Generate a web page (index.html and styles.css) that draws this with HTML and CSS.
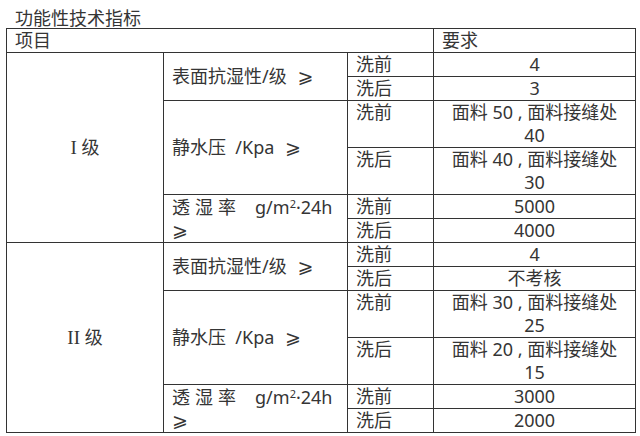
FILE: index.html
```html
<!DOCTYPE html>
<html lang="zh">
<head>
<meta charset="utf-8">
<link rel="stylesheet" href="styles.css">
</head>
<body>
<div class="page">
  <div class="title">功能性技术指标</div>
  <table class="spec">
    <colgroup>
      <col class="c1"><col class="c2"><col class="c3"><col class="c4">
    </colgroup>
    <tr class="r1">
      <td colspan="3" class="head">项目</td>
      <td class="head">要求</td>
    </tr>
    <tr class="r1">
      <td rowspan="6" class="grade"><span class="roman">I</span> 级</td>
      <td rowspan="2" class="item">表面抗湿性/级 <span class="ge">⩾</span></td>
      <td class="wash">洗前</td>
      <td class="val">4</td>
    </tr>
    <tr class="r1">
      <td class="wash">洗后</td>
      <td class="val">3</td>
    </tr>
    <tr class="r2">
      <td rowspan="2" class="item">静水压 &nbsp;/Kpa <span class="ge">⩾</span></td>
      <td class="wash">洗前</td>
      <td class="val">面料 50 , 面料接缝处<br>40</td>
    </tr>
    <tr class="r2">
      <td class="wash">洗后</td>
      <td class="val">面料 40 , 面料接缝处<br>30</td>
    </tr>
    <tr class="r1">
      <td rowspan="2" class="item"><span class="sp">透湿率</span>&nbsp;&nbsp; g/m<sup>2</sup>·24h<br><span class="ge first">⩾</span></td>
      <td class="wash">洗前</td>
      <td class="val">5000</td>
    </tr>
    <tr class="r1">
      <td class="wash">洗后</td>
      <td class="val">4000</td>
    </tr>
    <tr class="r1">
      <td rowspan="6" class="grade"><span class="roman">II</span> 级</td>
      <td rowspan="2" class="item">表面抗湿性/级 <span class="ge">⩾</span></td>
      <td class="wash">洗前</td>
      <td class="val">4</td>
    </tr>
    <tr class="r1">
      <td class="wash">洗后</td>
      <td class="val">不考核</td>
    </tr>
    <tr class="r2">
      <td rowspan="2" class="item">静水压 &nbsp;/Kpa <span class="ge">⩾</span></td>
      <td class="wash">洗前</td>
      <td class="val">面料 30 , 面料接缝处<br>25</td>
    </tr>
    <tr class="r2">
      <td class="wash">洗后</td>
      <td class="val">面料 20 , 面料接缝处<br>15</td>
    </tr>
    <tr class="r1">
      <td rowspan="2" class="item"><span class="sp">透湿率</span>&nbsp;&nbsp; g/m<sup>2</sup>·24h<br><span class="ge first">⩾</span></td>
      <td class="wash">洗前</td>
      <td class="val">3000</td>
    </tr>
    <tr class="r1">
      <td class="wash">洗后</td>
      <td class="val">2000</td>
    </tr>
  </table>
</div>
</body>
</html>
```
FILE: styles.css
```css
html, body {
  margin: 0;
  padding: 0;
  background: #ffffff;
}
.page {
  padding: 8px 0 0 6px;
  font-family: "Noto Sans", "Noto Sans CJK SC", sans-serif;
  font-size: 18px;
  color: #353535;
}
.title {
  line-height: 20px;
  padding-left: 9px;
}
.spec {
  border-collapse: collapse;
  table-layout: fixed;
  width: 629px;
  font-size: 18px;
}
.c1 { width: 157px; }
.c2 { width: 184px; }
.c3 { width: 86px; }
.c4 { width: 202px; }
.spec td {
  border: 1px solid #333333;
  padding: 0 8px;
  line-height: 23px;
  white-space: nowrap;
  overflow: hidden;
}
.r1 { height: 24px; }
.r2 { height: 47px; }
.head { text-align: left; padding-left: 9px; }
.grade { text-align: center; vertical-align: middle; }
.roman { font-family: "Liberation Serif", serif; font-size: 19px; }
.item { vertical-align: middle; padding-left: 9px; }
.wash { vertical-align: top; }
.val { text-align: center; vertical-align: top; }
.ge { font-family: "DejaVu Sans", sans-serif; font-size: 19px; margin-left: 6px; }
.ge.first { margin-left: 0; }
.sp { letter-spacing: 5px; }
sup { font-size: 11px; line-height: 0; vertical-align: 6px; }
```
